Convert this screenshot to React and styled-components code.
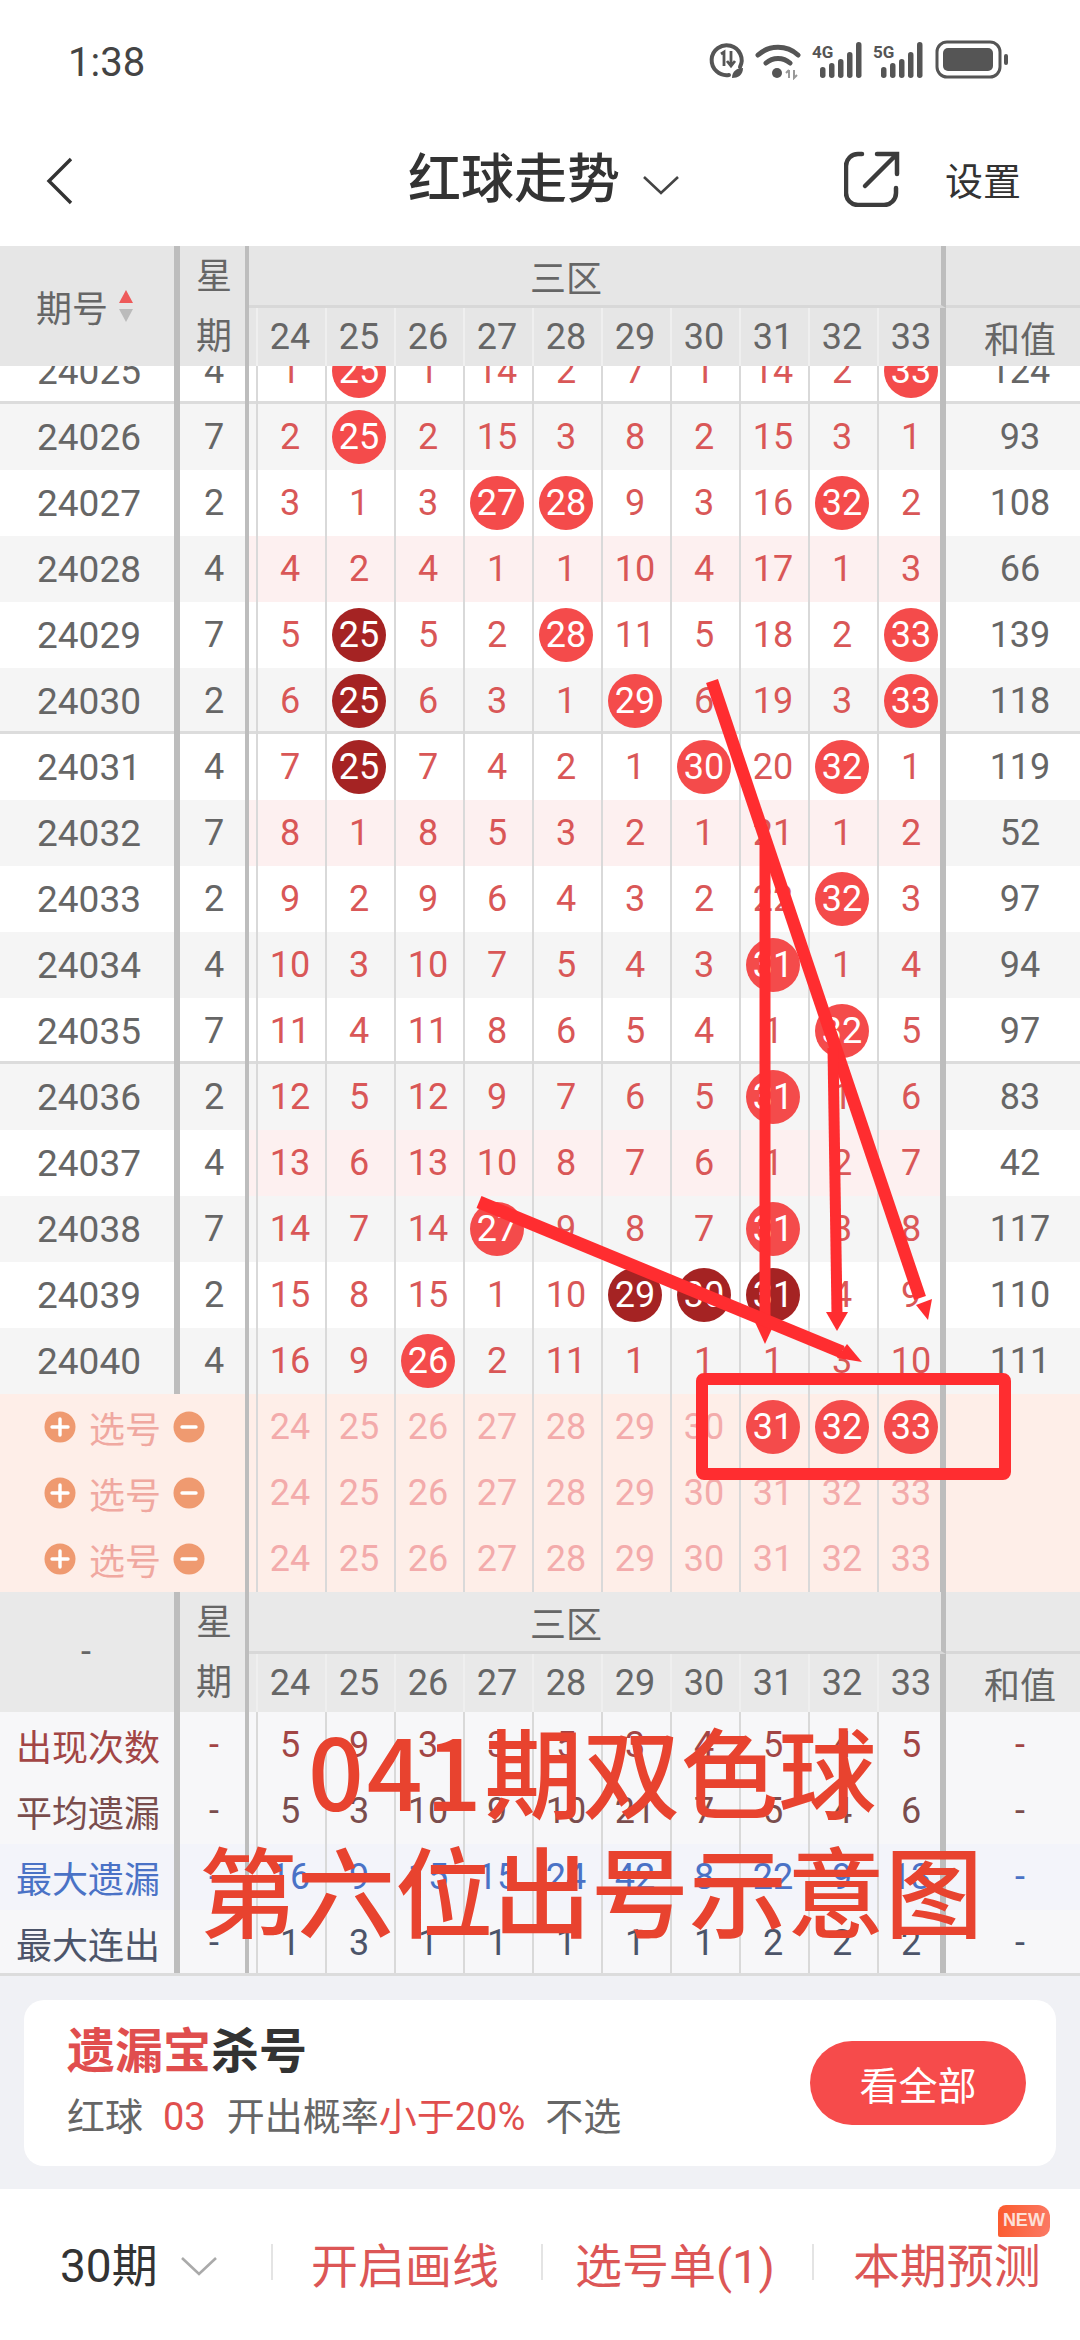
import React from "react";
import styled, { createGlobalStyle } from "styled-components";

const Global = createGlobalStyle`
  html, body { margin: 0; padding: 0; background: #fff; }
  * { box-sizing: border-box; }
`;

const CJK = `Roboto, "Noto Sans CJK SC", sans-serif`;
const GRID = `180px 69px 9px repeat(9, 69px) 67px 1fr`;

const Page = styled.div`
  position: relative;
  width: 1080px;
  height: 2340px;
  overflow: hidden;
  background: #fff;
  font-family: ${CJK};
  color: #666;
`;

const StatusBar = styled.div`
  height: 124px;
  padding: 39px 70px 0 68px;
  display: flex;
  justify-content: space-between;
  align-items: flex-start;
`;
const Time = styled.div`
  font-size: 40px;
  line-height: 48px;
  color: #444;
`;
const StatusIcons = styled.svg`
  width: 330px;
  height: 40px;
  margin-top: 1px;
  flex: none;
`;

const TopNav = styled.div`
  height: 122px;
  padding: 4px 58px 0 46px;
  display: flex;
  align-items: center;
`;
const Back = styled.svg`
  width: 28px;
  height: 48px;
  flex: none;
  margin-top: -12px;
`;
const TitleWrap = styled.div`
  display: flex;
  align-items: center;
  margin-left: 334px;
  margin-top: -14px;
`;
const Title = styled.div`
  font-size: 53px;
  line-height: 60px;
  font-weight: 500;
  color: #333;
`;
const TitleCaret = styled.svg`
  width: 38px;
  height: 20px;
  margin-left: 22px;
  margin-top: 10px;
  flex: none;
`;
const Share = styled.svg`
  width: 56px;
  height: 56px;
  flex: none;
  margin-left: 164px;
  margin-top: -16px;
`;
const Setting = styled.div`
  font-size: 38px;
  line-height: 44px;
  color: #333;
  margin-left: 45px;
  margin-top: -10px;
`;

const HeaderGrid = styled.div`
  display: grid;
  grid-template-columns: ${GRID};
  grid-template-rows: 62px 58px;
  height: 120px;
  background: ${(p) => p.$bg};
  font-size: 36px;
  color: #666;
`;
const HeadId = styled.div`
  grid-row: 1 / 3;
  grid-column: 1;
  border-right: 6px solid #bdbdbd;
  display: flex;
  align-items: center;
  justify-content: center;
  padding-right: 2px;
  gap: 8px;
`;
const SortArrows = styled.svg`
  width: 20px;
  height: 34px;
  flex: none;
`;
const HeadWeek = styled.div`
  grid-row: 1 / 3;
  grid-column: 2;
  border-right: 4px solid #bdbdbd;
  padding: 1px 0 0 3px;
  display: flex;
  flex-direction: column;
  align-items: center;
  line-height: 60px;
`;
const Zone = styled.div`
  grid-row: 1;
  grid-column: 3 / 14;
  border-bottom: 3px solid #d8d8d8;
  border-right: 5px solid #bdbdbd;
  display: flex;
  align-items: center;
  justify-content: center;
  padding-right: 58px;
`;
const ZoneTail = styled.div`
  grid-row: 1;
  grid-column: 14;
  border-bottom: 3px solid #d8d8d8;
`;
const HeadStripe = styled.div`
  grid-row: 2;
  grid-column: 3;
  border-right: 2px solid #efefef;
`;
const HeadNum = styled.div`
  border-right: ${(p) => (p.$last ? "6px solid #bdbdbd" : "2px solid #efefef")};
  padding: ${(p) => (p.$last ? "0 0 0 3px" : "0 3px 0 0")};
  display: flex;
  align-items: center;
  justify-content: center;
`;
const HeadSum = styled.div`
  display: flex;
  align-items: center;
  justify-content: center;
  padding-left: 14px;
`;

const ClipRow = styled.div`
  height: 38px;
  overflow: hidden;
  display: flex;
  flex-direction: column;
  justify-content: flex-end;
`;
const Row = styled.div`
  display: grid;
  grid-template-columns: ${GRID};
  height: 66px;
  flex: none;
  background: ${(p) => p.$bg || (p.$alt ? "#f5f5f5" : "#fff")};
  box-shadow: ${(p) => (p.$thick ? "inset 0 -3px 0 #dcdcdc" : "none")};
  font-size: 36px;
`;
const IdCell = styled.div`
  border-right: 6px solid #bdbdbd;
  padding-left: 4px;
  display: flex;
  align-items: center;
  justify-content: center;
  color: #666;
  font-size: 37px;
`;
const WeekCell = styled.div`
  border-right: 4px solid #bdbdbd;
  padding-left: 3px;
  display: flex;
  align-items: center;
  justify-content: center;
  color: #666;
`;
const Stripe = styled.div`
  border-right: 2px solid #d9d9d9;
  background: ${(p) => p.$bg || "transparent"};
`;
const NumCell = styled.div`
  border-right: ${(p) => (p.$last ? "6px solid #bdbdbd" : "2px solid #d9d9d9")};
  padding: ${(p) => (p.$last ? "0 0 0 3px" : "0 3px 0 0")};
  display: flex;
  align-items: center;
  justify-content: center;
  color: ${(p) => p.$color || "#d95757"};
  background: ${(p) => p.$bg || "transparent"};
`;
const Ball = styled.div`
  width: 54px;
  height: 54px;
  border-radius: 50%;
  background: ${(p) => (p.$dark ? "#a52323" : "#f44b4b")};
  color: #fff;
  display: flex;
  align-items: center;
  justify-content: center;
  font-size: 36px;
  flex: none;
`;
const SumCell = styled.div`
  display: flex;
  align-items: center;
  justify-content: center;
  color: ${(p) => p.$color || "#666"};
  padding-left: 14px;
`;

const PickRow = styled(Row)`
  background: #feeee8;
`;
const PickLabel = styled.div`
  grid-column: 1 / 3;
  border-right: 4px solid #bdbdbd;
  display: flex;
  align-items: center;
  padding-left: 44px;
  color: #f0a8a0;
  font-size: 36px;
`;
const RoundIcon = styled.svg`
  width: 32px;
  height: 32px;
  flex: none;
`;
const PickText = styled.span`
  width: 72px;
  margin: 0 12px 0 13px;
  white-space: nowrap;
`;

const StatLabel = styled(IdCell)`
  color: ${(p) => p.$color};
  font-size: 36px;
  white-space: nowrap;
  padding-left: 2px;
`;
const StatWeek = styled(WeekCell)`
  color: ${(p) => p.$color};
`;

const Rule = styled.div`
  height: 3px;
  background: #dcdcdc;
  margin-top: -3px;
  position: relative;
`;

const Promo = styled.div`
  height: 213px;
  background: #f0f1f5;
  padding: 24px 24px 23px;
`;
const PromoCard = styled.div`
  height: 166px;
  background: #fff;
  border-radius: 20px;
  padding: 0 30px 0 43px;
  display: flex;
  align-items: center;
  justify-content: space-between;
`;
const PromoCopy = styled.div`
  display: flex;
  flex-direction: column;
`;
const PromoTitle = styled.div`
  font-size: 48px;
  line-height: 58px;
  font-weight: 700;
  color: #333;
  margin-top: -2px;
`;
const Red = styled.span`
  color: #e04e4e;
`;
const PromoLine = styled.div`
  font-size: 38px;
  line-height: 50px;
  color: #666;
  margin-top: 11px;
  white-space: nowrap;
`;
const Chunk = styled.span`
  margin-left: ${(p) => p.$ml || 0}px;
  color: ${(p) => (p.$red ? "#e04e4e" : "inherit")};
`;
const PromoButton = styled.div`
  width: 216px;
  height: 84px;
  border-radius: 42px;
  background: #f64b4b;
  color: #fff;
  font-size: 39px;
  display: flex;
  align-items: center;
  justify-content: center;
  margin-top: -1px;
`;

const BottomBar = styled.div`
  height: 150px;
  display: flex;
  align-items: center;
  padding: 0 0 4px 60px;
`;
const Period = styled.div`
  font-size: 46px;
  color: #333;
  white-space: nowrap;
  width: 120px;
`;
const PeriodCaret = styled.svg`
  width: 38px;
  height: 20px;
  flex: none;
  margin-top: 8px;
`;
const Divider = styled.div`
  width: 2px;
  height: 36px;
  background: #e4e4e4;
  flex: none;
  margin-left: ${(p) => p.$ml}px;
`;
const Action = styled.div`
  position: relative;
  font-size: 47px;
  color: #dc5656;
  white-space: nowrap;
  margin-left: ${(p) => p.$ml}px;
`;
const NewBadge = styled.div`
  position: absolute;
  left: 145px;
  top: -23px;
  width: 52px;
  height: 32px;
  border-radius: 8px 12px 10px 2px;
  background: linear-gradient(100deg, #fb5a2c, #fb7a66);
  color: #fde0d8;
  font-size: 18px;
  font-weight: 700;
  display: flex;
  align-items: center;
  justify-content: center;
  font-family: "Liberation Sans", sans-serif;
`;

const Notes = styled.svg`
  position: absolute;
  left: 0;
  top: 0;
  width: 1080px;
  height: 2340px;
  pointer-events: none;
`;
const Caption = styled.div`
  position: absolute;
  left: ${(p) => p.$x}px;
  top: ${(p) => p.$y}px;
  font-size: 98px;
  line-height: 110px;
  font-weight: 500;
  color: #e8432f;
  white-space: nowrap;
  font-family: "Noto Sans CJK SC", sans-serif;
`;
const CaptionDigits = styled.span`
  letter-spacing: 3px;
`;

const COLS = [24, 25, 26, 27, 28, 29, 30, 31, 32, 33];
const rows = [
  ["24026", 7, "2 *25 2 15 3 8 2 15 3 1", 93],
  ["24027", 2, "3 1 3 *27 *28 9 3 16 *32 2", 108],
  ["24028", 4, "4 2 4 1 1 10 4 17 1 3", 66],
  ["24029", 7, "5 #25 5 2 *28 11 5 18 2 *33", 139],
  ["24030", 2, "6 #25 6 3 1 *29 6 19 3 *33", 118],
  ["24031", 4, "7 #25 7 4 2 1 *30 20 *32 1", 119],
  ["24032", 7, "8 1 8 5 3 2 1 21 1 2", 52],
  ["24033", 2, "9 2 9 6 4 3 2 22 *32 3", 97],
  ["24034", 4, "10 3 10 7 5 4 3 *31 1 4", 94],
  ["24035", 7, "11 4 11 8 6 5 4 1 *32 5", 97],
  ["24036", 2, "12 5 12 9 7 6 5 *31 1 6", 83],
  ["24037", 4, "13 6 13 10 8 7 6 1 2 7", 42],
  ["24038", 7, "14 7 14 *27 9 8 7 *31 3 8", 117],
  ["24039", 2, "15 8 15 1 10 #29 #30 #31 4 9", 110],
  ["24040", 4, "16 9 *26 2 11 1 1 1 3 10", 111],
];
const PINK = new Set(["24028", "24032", "24037"]);
const THICK = new Set(["24030", "24035"]);

const stats = [
  ["出现次数", "#a24545", "#f7f7f9", "5 9 3 3 5 3 4 5 4 5"],
  ["平均遗漏", "#7a4d4d", "#f7f7f9", "5 3 10 9 10 21 7 5 4 6"],
  ["最大遗漏", "#4a72c6", "#f3f4fa", "16 9 15 15 24 42 8 22 9 13"],
  ["最大连出", "#4c5469", "#f7f7f9", "1 3 1 1 1 1 1 2 2 2"],
];

function Nums({ values, pink, color }) {
  return values.split(" ").map((v, i) => {
    const mark = v[0];
    const isBall = mark === "*" || mark === "#";
    return (
      <NumCell key={i} $last={i === 9} $bg={pink ? "#fdf0f0" : undefined} $color={color}>
        {isBall ? <Ball $dark={mark === "#"}>{v.slice(1)}</Ball> : v}
      </NumCell>
    );
  });
}

function DataRow({ id, week, values, sum, alt, thick, pink }) {
  return (
    <Row $alt={alt} $thick={thick}>
      <IdCell>{id}</IdCell>
      <WeekCell>{week}</WeekCell>
      <Stripe $bg={pink ? "#fdf0f0" : undefined} />
      <Nums values={values} pink={pink} />
      <SumCell>{sum}</SumCell>
    </Row>
  );
}

function TableHead({ bg, children }) {
  return (
    <HeaderGrid $bg={bg}>
      <HeadId>{children}</HeadId>
      <HeadWeek>
        <span>星</span>
        <span>期</span>
      </HeadWeek>
      <Zone>三区</Zone>
      <ZoneTail />
      <HeadStripe />
      {COLS.map((c, i) => (
        <HeadNum key={c} $last={i === 9}>{c}</HeadNum>
      ))}
      <HeadSum>和值</HeadSum>
    </HeaderGrid>
  );
}

function PickIcon({ plus }) {
  return (
    <RoundIcon viewBox="0 0 32 32">
      <circle cx="16" cy="16" r="15.5" fill="#ef9a70" />
      <path d={plus ? "M8 16h16M16 8v16" : "M9 16h14"} stroke="#fff" strokeWidth="3.4" strokeLinecap="round" />
    </RoundIcon>
  );
}

function Pick({ balls }) {
  return (
    <PickRow>
      <PickLabel>
        <PickIcon plus />
        <PickText>选号</PickText>
        <PickIcon />
      </PickLabel>
      <Stripe />
      {COLS.map((c, i) => (
        <NumCell key={c} $last={i === 9} $color="#f3abab">
          {balls && c >= 31 ? <Ball>{c}</Ball> : c}
        </NumCell>
      ))}
      <div />
    </PickRow>
  );
}

function Arrow({ d, head, w = 11 }) {
  return (
    <>
      <path d={d} stroke="#ff2d30" strokeWidth={w} fill="none" />
      <polygon points={head} fill="#ff2d30" />
    </>
  );
}

function Signal({ x, label }) {
  return (
    <g transform={`translate(${x} 0)`}>
      <text x="0" y="18" fontSize="17" fontWeight="700" fill="#555" fontFamily="Roboto, sans-serif">{label}</text>
      <g fill="#555">
        <rect x="8" y="27" width="5.5" height="11" rx="2.7" />
        <rect x="17" y="23" width="5.5" height="15" rx="2.7" />
        <rect x="26" y="19" width="5.5" height="19" rx="2.7" />
        <rect x="35" y="12" width="5.5" height="26" rx="2.7" />
        <rect x="44" y="2" width="5.5" height="36" rx="2.7" />
      </g>
    </g>
  );
}

export default function App() {
  return (
    <Page>
      <Global />
      <StatusBar>
        <Time>1:38</Time>
        <StatusIcons viewBox="0 0 330 40">
          <path d="M60 27a15 15 0 1 0-11 8" fill="none" stroke="#555" strokeWidth="4" strokeLinecap="round" />
          <path d="M41 14l3-2v14M51 11v15m-4-5l4 5 4-5" fill="none" stroke="#555" strokeWidth="2.8" />
          <path d="M52 38c0-7 5-10 11-10 0 7-5 10-11 10z" fill="#555" />
          <path d="M78 15a30 30 0 0 1 40 0M86 23a18 18 0 0 1 24 0" fill="none" stroke="#555" strokeWidth="5" strokeLinecap="round" />
          <circle cx="97" cy="33" r="5" fill="#555" />
          <path d="M109 38v-8M106 33l3-3M114 30v8l3-3" fill="none" stroke="#999" strokeWidth="2" />
          <Signal x={132} label="4G" />
          <Signal x={193} label="5G" />
          <rect x="257" y="2" width="63" height="35" rx="10" fill="none" stroke="#555" strokeWidth="3" />
          <rect x="263" y="8" width="50" height="23" rx="5" fill="#555" />
          <rect x="324" y="14" width="4" height="11" rx="2" fill="#555" />
        </StatusIcons>
      </StatusBar>

      <TopNav>
        <Back viewBox="0 0 28 48">
          <path d="M25 2L3 24l22 22" fill="none" stroke="#333" strokeWidth="3.4" />
        </Back>
        <TitleWrap>
          <Title>红球走势</Title>
          <TitleCaret viewBox="0 0 38 20">
            <path d="M2 2l17 16L36 2" fill="none" stroke="#444" strokeWidth="2.6" />
          </TitleCaret>
        </TitleWrap>
        <Share viewBox="0 0 56 56">
          <path d="M18 3h-4A12 12 0 0 0 2 15v27a12 12 0 0 0 12 12h26a12 12 0 0 0 12-12v-5" fill="none" stroke="#3c3c3c" strokeWidth="4.5" strokeLinecap="round" />
          <path d="M33 3h20v20M52 4L21 35" fill="none" stroke="#3c3c3c" strokeWidth="4.5" strokeLinecap="round" />
        </Share>
        <Setting>设置</Setting>
      </TopNav>

      <TableHead bg="#e6e6e6">
        期号
        <SortArrows viewBox="0 0 20 34">
          <path d="M10 1l7 13H3z" fill="#ee5a5a" />
          <path d="M10 33l7-13H3z" fill="#bbb" />
        </SortArrows>
      </TableHead>

      <ClipRow>
        <DataRow id="24025" week={4} values="1 *25 1 14 2 7 1 14 2 *33" sum={124} thick />
      </ClipRow>
      {rows.map(([id, week, values, sum], i) => (
        <DataRow
          key={id}
          id={id}
          week={week}
          values={values}
          sum={sum}
          alt={i % 2 === 0}
          thick={THICK.has(id)}
          pink={PINK.has(id)}
        />
      ))}

      <Pick balls />
      <Pick />
      <Pick />

      <TableHead bg="#e9e9e9">-</TableHead>

      {stats.map(([label, color, bg, values]) => (
        <Row key={label} $bg={bg}>
          <StatLabel $color={color}>{label}</StatLabel>
          <StatWeek $color={color}>-</StatWeek>
          <Stripe />
          <Nums values={values} color={color} />
          <SumCell $color={color}>-</SumCell>
        </Row>
      ))}
      <Rule />

      <Promo>
        <PromoCard>
          <PromoCopy>
            <PromoTitle>
              <Red>遗漏宝</Red>杀号
            </PromoTitle>
            <PromoLine>
              红球
              <Chunk $ml={20} $red>03</Chunk>
              <Chunk $ml={21}>开出概率</Chunk>
              <Chunk $red>小于20%</Chunk>
              <Chunk $ml={20}>不选</Chunk>
            </PromoLine>
          </PromoCopy>
          <PromoButton>看全部</PromoButton>
        </PromoCard>
      </Promo>

      <BottomBar>
        <Period>30期</Period>
        <PeriodCaret viewBox="0 0 38 20">
          <path d="M2 2l17 16L36 2" fill="none" stroke="#aaa" strokeWidth="2.6" />
        </PeriodCaret>
        <Divider $ml={53} />
        <Action $ml={38}>开启画线</Action>
        <Divider $ml={42} />
        <Action $ml={32}>选号单(1)</Action>
        <Divider $ml={37} />
        <Action $ml={39}>
          本期预测
          <NewBadge>NEW</NewBadge>
        </Action>
      </BottomBar>

      <Notes viewBox="0 0 1080 2340">
        <Arrow w={12.5} d="M712 681L920 1298" head="932,1299 916,1305 928,1320" />
        <Arrow d="M765 839V1322" head="754,1320 776,1320 765,1344" />
        <Arrow d="M833 1048L837 1314" head="826,1312 848,1312 837,1331" />
        <Arrow w={13} d="M479 1202L842 1352" head="847,1344 837,1358 862,1362" />
        <rect x="702" y="1379" width="303" height="95" rx="2" fill="none" stroke="#ff2d30" strokeWidth="12" />
      </Notes>
      <Caption $x={308} $y={1713}>
        <CaptionDigits>041</CaptionDigits>期双色球
      </Caption>
      <Caption $x={199} $y={1832}>第六位出号示意图</Caption>
    </Page>
  );
}
